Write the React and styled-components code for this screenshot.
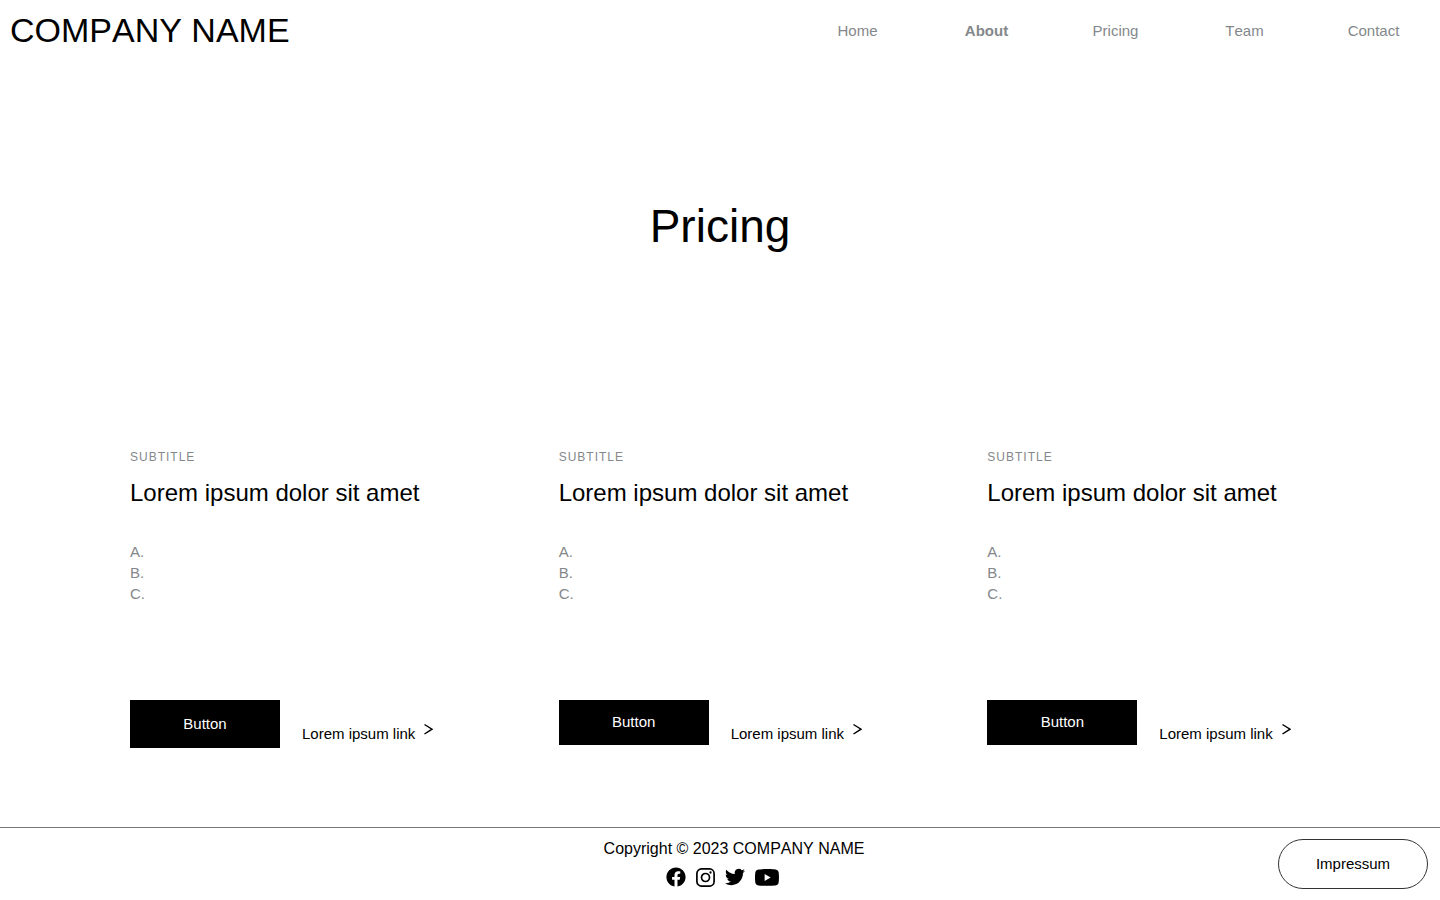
import React from "react";
import styled, { createGlobalStyle } from "styled-components";

const GlobalStyle = createGlobalStyle`
  *, *::before, *::after { box-sizing: border-box; }
  body {
    margin: 0;
    background: #fff;
    color: #000;
    font-family: "Liberation Sans", Arial, Helvetica, sans-serif;
    font-size: 15px;
    line-height: 21px;
    font-kerning: none;
  }
`;

const Page = styled.div`
  display: flex;
  flex-direction: column;
  min-height: 100vh;
`;

const Header = styled.header`
  display: flex;
  align-items: center;
  justify-content: space-between;
  height: 60px;
  padding: 0 2px 0 10px;
`;

const Brand = styled.a`
  color: #000;
  font-size: 34px;
  line-height: 40px;
  text-decoration: none;
  white-space: nowrap;
`;

const Nav = styled.nav`
  display: grid;
  grid-template-columns: repeat(5, 129px);
`;

const NavLink = styled.a`
  color: #84888b;
  font-weight: ${({ $active }) => ($active ? 700 : 400)};
  text-align: center;
  text-decoration: none;
`;

const Main = styled.main`
  flex: 1;
`;

const Title = styled.h1`
  margin: 0;
  padding: 139px 0 194px;
  font-size: 46px;
  font-weight: 400;
  line-height: 54px;
  text-align: center;
`;

const Plans = styled.div`
  display: grid;
  grid-template-columns: repeat(3, 1fr);
  padding: 0 24px 48px 130px;
`;

const Plan = styled.section`
  display: flex;
  flex-direction: column;
`;

const Subtitle = styled.p`
  margin: 0;
  color: #84888b;
  font-size: 12px;
  line-height: 20px;
  letter-spacing: 1px;
`;

const PlanTitle = styled.h2`
  margin: 12px 0 34px;
  font-size: 24px;
  font-weight: 400;
  line-height: 28px;
`;

const Features = styled.ul`
  margin: 0;
  padding: 0;
  list-style: none;
  color: #84888b;
`;

const Actions = styled.div`
  display: flex;
  align-items: flex-start;
  gap: 22px;
  margin-top: 96px;
`;

const PlanButton = styled.button`
  width: 150px;
  height: ${({ $tall }) => ($tall ? 48 : 45)}px;
  padding: 0 0 2px;
  border: 0;
  background: #000;
  color: #fff;
  font: inherit;
  font-kerning: none;
  cursor: pointer;
`;

const PlanLink = styled.a`
  display: flex;
  align-items: flex-start;
  gap: 8px;
  padding-top: 23px;
  color: #000;
  text-decoration: none;
  white-space: nowrap;
`;

const Footer = styled.footer`
  display: grid;
  grid-template-columns: 1fr auto 1fr;
  align-items: start;
  height: 73px;
  padding: 11px 12px 0 40px;
  border-top: 1px solid #777;
`;

const Legal = styled.div`
  grid-column: 2;
`;

const Copyright = styled.p`
  margin: 0;
  font-size: 16px;
  line-height: 20px;
  white-space: nowrap;
`;

const Social = styled.div`
  display: flex;
  align-items: center;
  gap: 10px;
  height: 20px;
  margin: 8px 0 0 62px;
`;

const SocialLink = styled.a`
  display: flex;
  color: #000;
`;

const ImpressumButton = styled.button`
  justify-self: end;
  width: 150px;
  height: 50px;
  padding: 0 0 2px;
  border: 1px solid #333;
  border-radius: 25px;
  background: #fff;
  color: #000;
  font: inherit;
  font-kerning: none;
  cursor: pointer;
`;

const Chevron = () => (
  <svg width="10" height="12" viewBox="0 0 10 12" fill="none" stroke="#000" strokeWidth="1.4" aria-hidden="true">
    <path d="M1.500 1.500 9 6.200 1.500 11" />
  </svg>
);

const FacebookIcon = () => (
  <svg width="20" height="20" viewBox="0 0 24 24" fill="currentColor" aria-hidden="true">
    <path d="M23.5 12.07C23.5 5.7 18.35.54 12 .54S.5 5.7.5 12.07c0 5.76 4.2 10.53 9.7 11.4v-8.06H7.28v-3.34h2.92V9.53c0-2.9 1.72-4.5 4.34-4.5 1.26 0 2.58.22 2.58.22v2.84h-1.45c-1.43 0-1.88.9-1.88 1.8v2.18h3.2l-.51 3.34h-2.69v8.06c5.5-.87 9.71-5.64 9.71-11.4Z" />
  </svg>
);

const InstagramIcon = () => (
  <svg width="19" height="19" viewBox="0 0 19 19" fill="none" stroke="currentColor" strokeWidth="1.7" aria-hidden="true">
    <rect x=".9" y=".9" width="17.2" height="17.2" rx="4.6" />
    <circle cx="9.5" cy="9.5" r="4" />
    <circle cx="14.5" cy="4.5" r="1.15" fill="currentColor" stroke="none" />
  </svg>
);

const TwitterIcon = () => (
  <svg width="20" height="20" viewBox="0 0 24 24" fill="currentColor" aria-hidden="true">
    <path d="M23.95 4.57a10 10 0 0 1-2.82.77 4.96 4.96 0 0 0 2.16-2.72c-.95.55-2 .95-3.13 1.18a4.92 4.92 0 0 0-8.38 4.48C7.69 8.09 4.07 6.13 1.64 3.16a4.82 4.82 0 0 0-.67 2.48c0 1.71.87 3.21 2.19 4.1a4.9 4.9 0 0 1-2.23-.62v.06a4.92 4.92 0 0 0 3.95 4.83 5 5 0 0 1-2.21.08 4.94 4.94 0 0 0 4.6 3.42A9.87 9.87 0 0 1 0 19.54a13.99 13.99 0 0 0 7.55 2.21c9.05 0 14-7.5 14-13.98 0-.21 0-.42-.02-.63a9.94 9.94 0 0 0 2.46-2.55l-.04-.02Z" />
  </svg>
);

const YoutubeIcon = () => (
  <svg width="24" height="17" viewBox="0 0 24 17" aria-hidden="true">
    <path
      fill="currentColor"
      d="M23.5 2.8A3 3 0 0 0 21.4.7C19.5.1 12 .1 12 .1S4.5.1 2.6.7A3 3 0 0 0 .5 2.8C0 4.7 0 8.5 0 8.5s0 3.8.5 5.7a3 3 0 0 0 2.1 2.1c1.9.6 9.4.6 9.4.6s7.5 0 9.4-.6a3 3 0 0 0 2.1-2.1c.5-1.9.5-5.7.5-5.7s0-3.8-.5-5.7Z"
    />
    <path fill="#fff" d="M9.6 5v7l6.1-3.5Z" />
  </svg>
);

const navItems = ["Home", "About", "Pricing", "Team", "Contact"];

const plans = [
  { id: "first", tall: true },
  { id: "second", tall: false },
  { id: "third", tall: false },
];

const socials = [
  { name: "Facebook", Icon: FacebookIcon },
  { name: "Instagram", Icon: InstagramIcon },
  { name: "Twitter", Icon: TwitterIcon },
  { name: "YouTube", Icon: YoutubeIcon },
];

export default function App() {
  return (
    <Page>
      <GlobalStyle />
      <Header>
        <Brand href="#home">COMPANY NAME</Brand>
        <Nav>
          {navItems.map((item) => (
            <NavLink key={item} href={`#${item.toLowerCase()}`} $active={item === "About"}>
              {item}
            </NavLink>
          ))}
        </Nav>
      </Header>
      <Main>
        <Title>Pricing</Title>
        <Plans>
          {plans.map(({ id, tall }) => (
            <Plan key={id}>
              <Subtitle>SUBTITLE</Subtitle>
              <PlanTitle>Lorem ipsum dolor sit amet</PlanTitle>
              <Features>
                <li>A.</li>
                <li>B.</li>
                <li>C.</li>
              </Features>
              <Actions>
                <PlanButton type="button" $tall={tall}>
                  Button
                </PlanButton>
                <PlanLink href="#more">
                  Lorem ipsum link
                  <Chevron />
                </PlanLink>
              </Actions>
            </Plan>
          ))}
        </Plans>
      </Main>
      <Footer>
        <Legal>
          <Copyright>Copyright © 2023 COMPANY NAME</Copyright>
          <Social>
            {socials.map(({ name, Icon }) => (
              <SocialLink key={name} href={`#${name.toLowerCase()}`} aria-label={name}>
                <Icon />
              </SocialLink>
            ))}
          </Social>
        </Legal>
        <ImpressumButton type="button">Impressum</ImpressumButton>
      </Footer>
    </Page>
  );
}
